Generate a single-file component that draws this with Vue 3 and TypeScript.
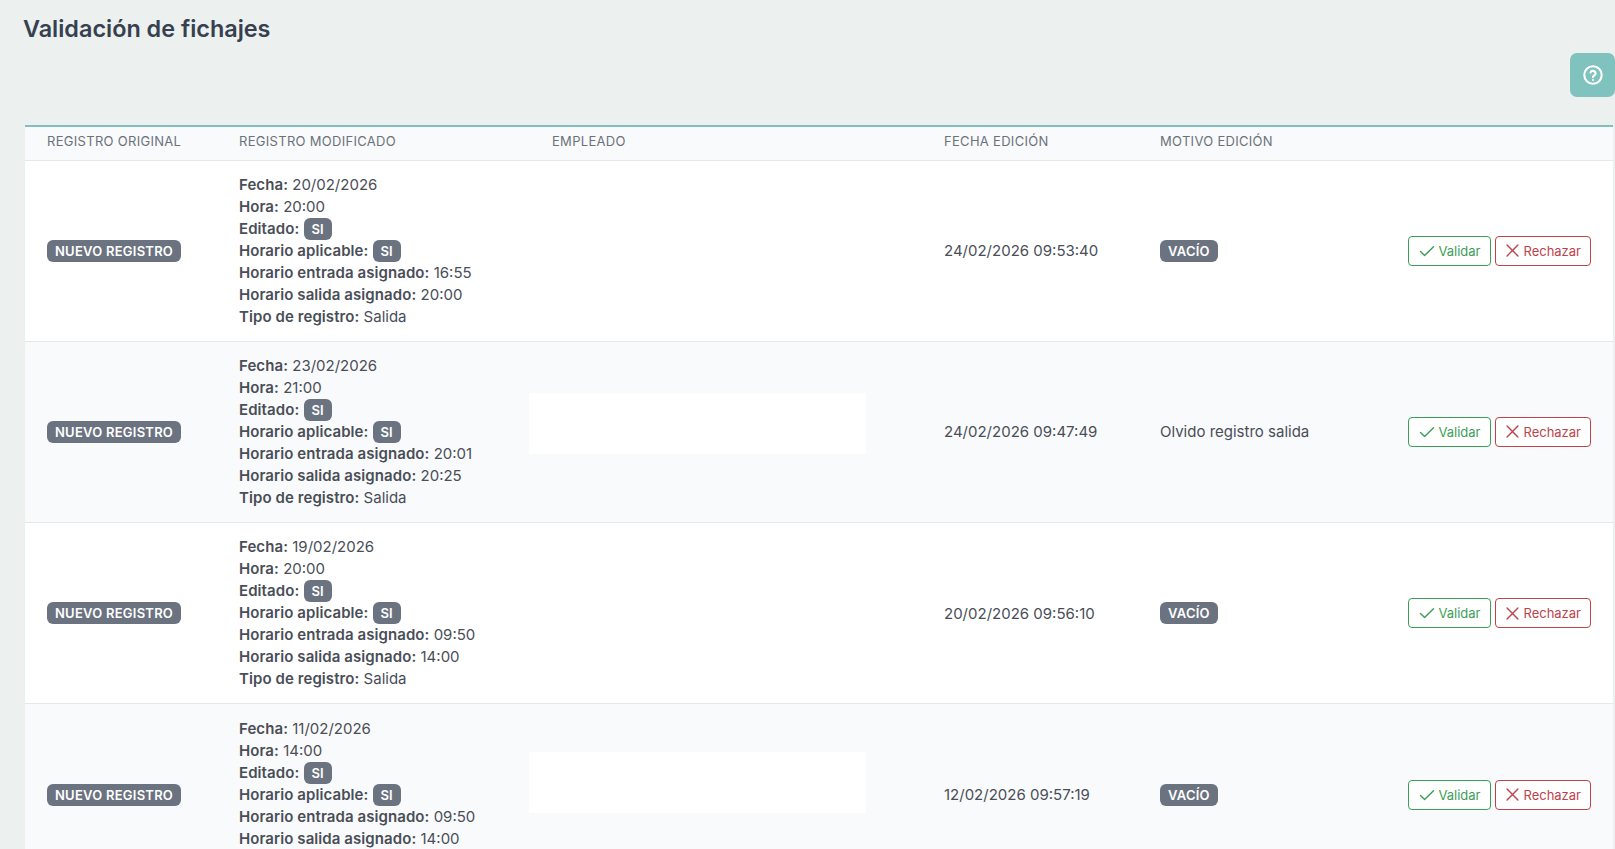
<script setup lang="ts">
interface Fichaje {
  fecha: string
  hora: string
  entrada: string
  salida: string
  edicion: string
  motivo: string | null
  oculto: boolean
}

const columnas = ['Registro original', 'Registro modificado', 'Empleado', 'Fecha edición', 'Motivo edición', '']

const fichajes: Fichaje[] = [
  { fecha: '20/02/2026', hora: '20:00', entrada: '16:55', salida: '20:00', edicion: '24/02/2026 09:53:40', motivo: null, oculto: false },
  { fecha: '23/02/2026', hora: '21:00', entrada: '20:01', salida: '20:25', edicion: '24/02/2026 09:47:49', motivo: 'Olvido registro salida', oculto: true },
  { fecha: '19/02/2026', hora: '20:00', entrada: '09:50', salida: '14:00', edicion: '20/02/2026 09:56:10', motivo: null, oculto: false },
  { fecha: '11/02/2026', hora: '14:00', entrada: '09:50', salida: '14:00', edicion: '12/02/2026 09:57:19', motivo: null, oculto: true },
]
</script>

<template>
  <div class="page">
    <h1 class="title">Validación de fichajes</h1>
    <div class="toolbar">
      <button class="help" type="button" aria-label="Ayuda">
        <svg width="22" height="22" viewBox="0 0 24 24" fill="none" stroke="currentColor" stroke-width="2.3" stroke-linecap="round" stroke-linejoin="round">
          <circle cx="12" cy="12" r="9.5" />
          <path d="M9.2 9.3a2.9 2.9 0 0 1 5.6 1c0 1.9-2.8 2.4-2.8 4" />
          <path d="M12 17.4v.1" />
        </svg>
      </button>
    </div>

    <table class="grid">
      <colgroup>
        <col class="c1" /><col class="c2" /><col class="c3" /><col class="c4" /><col class="c5" /><col />
      </colgroup>
      <thead>
        <tr>
          <th v-for="col in columnas" :key="col">{{ col }}</th>
        </tr>
      </thead>
      <tbody>
        <tr v-for="f in fichajes" :key="f.edicion">
          <td><span class="badge">Nuevo registro</span></td>
          <td class="detail">
            <div><b>Fecha:</b> {{ f.fecha }}</div>
            <div><b>Hora:</b> {{ f.hora }}</div>
            <div><b>Editado:</b> <span class="badge small">SI</span></div>
            <div><b>Horario aplicable:</b> <span class="badge small">SI</span></div>
            <div><b>Horario entrada asignado:</b> {{ f.entrada }}</div>
            <div><b>Horario salida asignado:</b> {{ f.salida }}</div>
            <div><b>Tipo de registro:</b> Salida</div>
          </td>
          <td class="employee"><div v-if="f.oculto" class="redacted"></div></td>
          <td>{{ f.edicion }}</td>
          <td>
            <template v-if="f.motivo">{{ f.motivo }}</template>
            <span v-else class="badge">Vacío</span>
          </td>
          <td class="actions">
            <button class="btn ok" type="button">
              <svg width="16" height="16" viewBox="0 0 16 16" fill="none" stroke="currentColor" stroke-width="1.4" stroke-linecap="round" stroke-linejoin="round">
                <path d="M1.5 8.6 5.6 12.6 14.5 3.8" />
              </svg>
              Validar
            </button>
            <button class="btn ko" type="button">
              <svg width="15" height="15" viewBox="0 0 16 16" fill="none" stroke="currentColor" stroke-width="1.5" stroke-linecap="round">
                <path d="M2.2 2.2 13.8 13.8M13.8 2.2 2.2 13.8" />
              </svg>
              Rechazar
            </button>
          </td>
        </tr>
      </tbody>
    </table>
  </div>
</template>

<style>
html,
body {
  overflow: hidden;
}
</style>

<style scoped>
.page {
  height: 849px;
  overflow: hidden;
  box-sizing: border-box;
  padding: 15px 0 0 25px;
  background: #ecf0ef;
  font-family: Inter, "Liberation Sans", sans-serif;
  font-size: 15px;
  color: #494e57;
}

.title {
  margin: 0;
  height: 28px;
  margin-left: -2px;
  font-family: Inter, sans-serif;
  font-size: 23.4px;
  line-height: 28px;
  font-weight: 600;
  color: #36404f;
}

.toolbar {
  display: flex;
  justify-content: flex-end;
  align-items: flex-start;
  padding-top: 10px;
  height: 82px;
  box-sizing: border-box;
}

.help {
  width: 45px;
  height: 44px;
  padding: 0;
  border: 0;
  border-radius: 7px;
  background: #7fc2be;
  color: #fff;
  display: flex;
  align-items: center;
  justify-content: center;
}

.grid {
  width: 1588px;
  table-layout: fixed;
  border-collapse: collapse;
  border-top: 2px solid #84bfba;
  background: #fff;
}

.c1 { width: 193px; }
.c2 { width: 313px; }
.c3 { width: 392px; }
.c4 { width: 216px; }
.c5 { width: 248px; }

th {
  height: 34px;
  padding: 0 21px 5px;
  box-sizing: border-box;
  text-align: left;
  font-size: 13px;
  font-weight: 400;
  letter-spacing: 0.3px;
  text-transform: uppercase;
  color: #6c727b;
  background: #f8fafb;
  border-bottom: 1px solid #e5e8ea;
}

th:first-child,
td:first-child {
  padding-left: 22px;
}

td {
  height: 181.3px;
  box-sizing: border-box;
  padding: 0 21px;
  vertical-align: middle;
  border-bottom: 1px solid #e5e8ea;
}

tbody tr:nth-child(even) td {
  background: #f9fafb;
}

.detail {
  line-height: 22px;
  white-space: nowrap;
}

.detail b {
  font-weight: 600;
  letter-spacing: 0.08px;
}

.badge {
  display: inline-block;
  padding: 0 8px;
  border-radius: 6px;
  background: #6b7280;
  color: #fff;
  font-size: 13px;
  line-height: 22px;
  font-weight: 600;
  letter-spacing: 0.24px;
  text-transform: uppercase;
  vertical-align: middle;
  white-space: nowrap;
}

.badge.small {
  vertical-align: top;
  letter-spacing: 0;
}

.employee {
  padding: 0;
}

.redacted {
  width: 337px;
  height: 61px;
  margin: 0 0 16px -2px;
  background: #fff;
}

tbody tr:nth-child(4) .redacted {
  margin-bottom: 24px;
}

.actions {
  padding: 0 22px 0 0;
  text-align: right;
  white-space: nowrap;
}

.btn {
  display: inline-flex;
  align-items: center;
  gap: 3px;
  height: 30px;
  padding: 0 9px;
  margin-left: 4px;
  border: 1px solid;
  border-radius: 4px;
  background: #fff;
  font-family: inherit;
  font-size: 13px;
  vertical-align: middle;
}

.ok {
  padding: 0 10px;
  color: #3c9e57;
  border-color: #3c9e57;
}

.ko {
  color: #bd4349;
  border-color: #bd4349;
}
</style>
